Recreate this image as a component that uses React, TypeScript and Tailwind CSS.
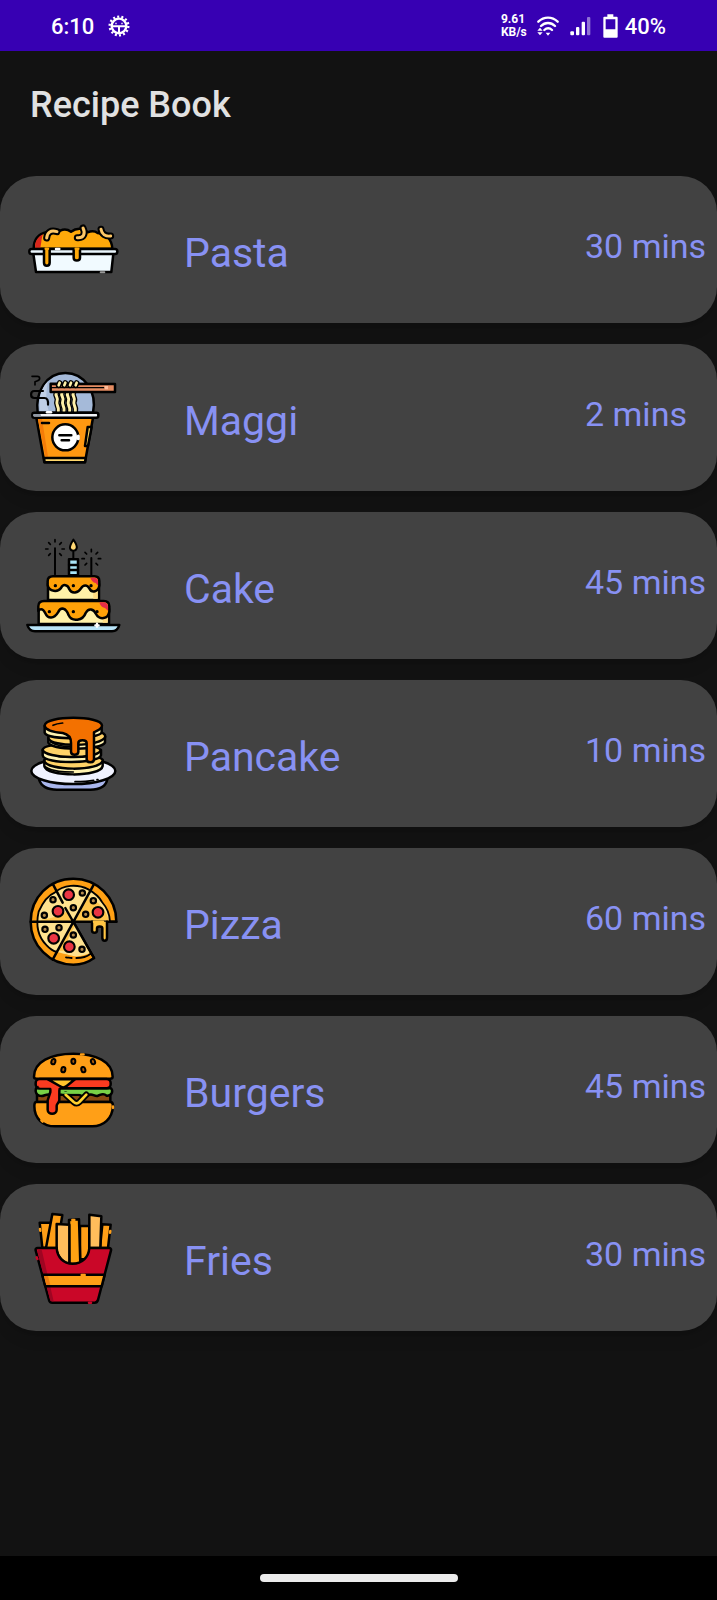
import type { ReactNode } from "react";

const ink = { stroke: "#000", strokeWidth: 7.5, strokeLinecap: "round", strokeLinejoin: "round" } as const;

function Art({ viewBox, children }: { viewBox: string; children: ReactNode }) {
  return (
    <svg viewBox={viewBox} className="mb-0.5 size-24 shrink-0" fill="none" aria-hidden="true" {...ink}>
      {children}
    </svg>
  );
}

function PastaIcon() {
  const noodles = ["M95 113c2-18 12-24 31-19", "M187 112c19 2 25-12 17-29", "M258 87c2 14 14 22 29 20"];
  return (
    <Art viewBox="30 2 288 288">
      <path d="M56 145c0-26 14-44 40-50 12-6 26-8 40-4 10-5 22-4 32 3 16-12 38-12 50 2 10-4 22-4 30 2 26 2 42 20 44 47z" fill="#ffa90a" />
      <path d="M60 142c0-20 8-32 24-40-5 10-4 22-8 40z" fill="#d9261c" stroke="none" />
      <path d="M55 160h240l-6 55H63z" fill="#f1faff" />
      <rect x="43" y="146" width="264" height="15" rx="7" fill="#eaf6fd" />
      <path d="M87 147v40c0 12 17 12 17 0v-40" fill="#ffa90a" />
      <path d="M176 147v25c0 11 19 11 19 0v-25" fill="#ffa90a" />
      <path d="M92 145h7M182 145h8" stroke="#ffa90a" />
      <path d="M123 146h10" stroke="#fff" />
      <path d="M257 216h11" stroke="#999" strokeWidth="6" />
      {noodles.map((d) => (
        <g key={d}>
          <path d={d} strokeWidth="21" />
          <path d={d} stroke="#ffc866" strokeWidth="9" />
        </g>
      ))}
    </Art>
  );
}

function MaggiIcon() {
  return (
    <Art viewBox="30 25 288 288">
      <path d="M68 156c-8-62 26-119 83-119s96 57 83 119z" fill="#a5bad9" />
      <path d="M75 150c-4-36 2-66 24-88-6 28-8 58 2 88z" fill="#c0cfe6" stroke="none" />
      <path d="M51 47h16c9 0 9 11 1 13l-8 3v10" strokeWidth="5" />
      <path d="M84 91H58c-13 0-13 21 0 21h30c9 0 12 7 11 20" strokeWidth="6.5" />
      {[124, 141, 158, 175].map((x) => (
        <g key={x}>
          <path d={`M${x} 97c-5 10 8 14 2 26-4 9 7 14 4 27`} strokeWidth="17" />
        </g>
      ))}
      {[124, 141, 158, 175].map((x) => (
        <path key={x} d={`M${x} 96c-5 11 8 15 2 27-4 9 7 14 4 28`} stroke="#fff0a8" strokeWidth="9" />
      ))}
      <path d="M107 69l193 1v24H107z" fill="#e58c62" />
      <path d="M108 81h158" strokeWidth="4" />
      <path d="M268 76h11v10h-9z" fill="#ffbd9b" stroke="none" />
      {[131, 148, 165, 182].map((x) => (
        <g key={x}>
          <path d={`M${x} 74l3-7`} strokeWidth="17" />
          <path d={`M${x} 74l3-8`} stroke="#fff0a8" strokeWidth="8" />
        </g>
      ))}
      <path d="M64 171h170l-24 134H88z" fill="#ff9811" />
      <path d="M69 175h12l18 113h-8z" fill="#f47c08" stroke="none" />
      <path d="M87 292h125l-2 13H89z" fill="#ffd86d" />
      <rect x="52" y="156" width="198" height="15" rx="6" fill="#f2f4f8" />
      <path d="M58 164h16" stroke="#8f98a5" />
      <path d="M96 155h12" stroke="#fff" />
      <path d="M81 187h21" />
      <circle cx="151" cy="230" r="39" fill="#fff" />
      <path d="M190 226v8" stroke="#fff" strokeWidth="9" />
      <path d="M133 224h36M140 239h22" />
      <path d="M218 199h12l-11 57h-9z" fill="#ffd45c" />
    </Art>
  );
}

function Spark({ x, y }: { x: number; y: number }) {
  return (
    <path
      strokeWidth="5"
      d={`M${x - 28} ${y}h7M${x + 21} ${y}h7M${x} ${y - 28}v7M${x - 19} ${y - 19}l5 5M${x + 19} ${y - 19}l-5 5M${x - 19} ${y + 19}l5-5M${x + 19} ${y + 19}l-5-5`}
    />
  );
}

function CakeIcon() {
  return (
    <Art viewBox="30 35 288 288">
      <Spark x={120} y={71} />
      <Spark x={229} y={100} />
      <path d="M120 69v78M229 98v50" strokeWidth="6" />
      <path d="M175 80v20" strokeWidth="6" />
      <path d="M175 43c8 11 12 19 10 26-3 10-17 10-20 0-2-7 3-15 10-26z" fill="#ffd873" strokeWidth="6" />
      <path d="M162 102h27v48h-27z" fill="#a8e4f7" />
      <path d="M162 119h27M162 134h27" strokeWidth="7" />
      <path d="M99 175h153v49H99z" fill="#fff1a8" />
      <path d="M234 190h14v30h-13z" fill="#ffdc83" stroke="none" />
      <path d="M98 180v-12c0-10 6-15 16-15h124c10 0 15 6 15 15v13c-3 18-22 24-30 8-6-11-18-12-25 0-8 14-28 18-35 3-4-15-19-17-25-4-9 13-36 12-40-8z" fill="#ffa108" />
      <path d="M226 157h12c7 0 11 4 11 11v13l-7-8c-8-2-13-7-16-16z" fill="#e62d48" stroke="none" />
      <path d="M71 250h211v46H71z" fill="#fff1a8" />
      <path d="M264 270h14v22h-15z" fill="#ffdc83" stroke="none" />
      <path d="M70 257v-14c0-11 6-16 17-16h179c11 0 17 6 17 16v15c-3 24-30 27-40 8-7-15-22-20-31-3-8 23-41 28-51 7-8-23-23-27-32-9-12 20-30 21-38 3-9-19-18-11-21-7z" fill="#ffa108" />
      <path d="M253 231h13c8 0 13 5 13 13v12l-9-8c-10-1-15-8-17-17z" fill="#e62d48" stroke="none" />
      <path d="M121 181h.1M175 181h.1M228 181h.1M103 259h.1M175 259h.1M246 259h.1" strokeWidth="10" />
      <path d="M37 299h276c-4 14-10 19-22 19H60c-12 0-19-6-23-19z" fill="#b9e4f8" />
      <path d="M246 295v9M241 300h10" stroke="#fff" strokeWidth="7" />
    </Art>
  );
}

function PancakeIcon() {
  return (
    <Art viewBox="30 13 288 288">
      <path d="M72 236c6 20 25 31 54 31h100c28 0 47-9 51-31z" fill="#a9b6ed" />
      <ellipse cx="175" cy="211" rx="126" ry="39" fill="#f0f2ff" />
      <path d="M180 243c20 0 40-1 56-4M246 237h3" strokeWidth="5" />
      <path d="M88 179v17c4 33 170 34 175 0v-18" fill="#fff2b0" />
      <path d="M88 180c4 31 170 33 175-1 0-21-175-21-175 1z" fill="#ffd267" />
      <path d="M92 199c24 15 55 15 83 15" strokeWidth="5" />
      <path d="M83 147v17c4 28 170 26 175 0v-16" fill="#fff2b0" />
      <path d="M83 148c8 25 157 31 174 2 0-23-174-28-174-2z" fill="#ffd267" />
      <path d="M130 167c29 4 62 3 87 0" strokeWidth="5" />
      <path d="M100 112v14c14 25 158 23 170 0v-17" fill="#fff2b0" />
      <path d="M100 112c6 29 161 27 171-4 0-10-11-13-25-14L103 100z" fill="#ffd267" />
      <path d="M107 124c19 12 38 14 61 14" strokeWidth="5" />
      <path d="M89 76v20c7 24 164 20 171-1V76" fill="#fff2b0" />
      <path d="M89 74c3-30 169-30 172 0 1 12-15 15-24 21v81c0 12-22 12-22 0v-49c0-11-25-11-25 0v26c0 12-22 12-22 0v-27c0-16-7-25-25-29-29-2-54-10-54-23z" fill="#f37100" />
      <path d="M114 74c8-4 18-6 29-7" strokeWidth="5" />
    </Art>
  );
}

function PizzaIcon() {
  return (
    <Art viewBox="30 22 288 288">
      <path d="M175 168h129c0-72-57-129-129-129S47 96 47 168s57 129 128 129c25 0 45-7 62-20z" fill="#ffa014" />
      <path d="M175 168h110c-1-26-9-42-24-59-10-19-25-29-41-38-33-17-75-14-101 10-25 10-39 37-48 57-9 40-1 77 24 101 14 18 38 22 60 27 28 10 43 7 69-3z" fill="#ffe28f" stroke="none" />
      <path d="M177 166l42-74c32 17 52 36 63 73zM173 166H75c4-9 43-3 64-25l18-2zM126 255l46-80 11 0c-15 30-30 45-28 80z" fill="#ffc64d" stroke="none" />
      <path d="M285 168c-1-26-9-42-24-59-10-19-25-29-41-38-33-17-75-14-101 10-25 10-39 37-48 57-9 40-1 77 24 101 11 12 20 17 31 20M153 275c8 1 13 2 17 2M184 277c18 0 32-4 42-12" strokeWidth="5.5" />
      <path d="M47 168h257M235 59L113 282M114 56l29 55M151 127l86 150" />
      <path d="M231 168v26c0 10 15 10 15 0v-6c0-7 16-7 16 0v28c0 12 14 12 14 0v-48" fill="#ffc543" />
      <path d="M237 168h27" stroke="#ffc543" />
      {[[161, 87], [129, 137], [249, 140], [116, 218], [163, 243]].map(([x, y]) => (
        <circle key={x} cx={x} cy={y} r="16" fill="#ea3543" strokeWidth="6.5" />
      ))}
      {[[114, 102], [202, 82], [235, 105], [175, 126], [212, 146], [88, 149], [90, 191], [132, 186], [175, 208], [201, 251]].map(([x, y]) => (
        <circle key={`${x}-${y}`} cx={x} cy={y} r="8" fill="#b48a4d" strokeWidth="6.5" />
      ))}
    </Art>
  );
}

function BurgerIcon() {
  return (
    <Art viewBox="30 1 288 288">
      <path d="M66 160h220v24H66z" fill="#8a4b12" />
      <path d="M63 143h225c8 10 1 23-13 22-12-10-17-2-28 1-11 1-17-10-27-2-10 8-21 3-30-2H106c-15-4-19 8-33 3-9-2-13-12-10-22z" fill="#78d147" />
      <path d="M57 108c0-45 50-69 118-69s118 24 118 69c0 4-4 6-8 6H65c-5 0-8-2-8-6z" fill="#ff9f17" />
      <path d="M64 184h222c7 0 8 6 8 12-2 38-28 61-62 61h-112c-35 0-62-22-62-61 0-7 2-12 6-12z" fill="#ff9f17" />
      <path d="M152 162l24 22c6 5 12 5 17 0l21-22" strokeWidth="19" />
      <path d="M152 162l24 22c6 5 12 5 17 0l21-22" stroke="#ffd12e" strokeWidth="8" />
      <path d="M144 156h56" stroke="#78d147" strokeWidth="6" />
      <rect x="62" y="115" width="225" height="28" rx="12" fill="#fb3b20" />
      <path d="M70 139h26c10 0 11 8 10 15l-8 25v28c0 16 27 16 27 0v-12c0-6 8-9 8-17v-28c0-7 5-11 13-11" fill="#fb3b20" />
      <path d="M76 135h60" stroke="#fb3b20" strokeWidth="12" />
      <path d="M99 116h81l-25 20c-7 6-14 6-21 0z" fill="#ffc52c" />
      {[[115, 63, 15], [175, 62, 0], [234, 63, -20], [145, 87, 10], [205, 87, -15]].map(([x, y, r]) => (
        <ellipse key={x} cx={x} cy={y} rx="6" ry="8" fill="#ae5b08" strokeWidth="6" transform={`rotate(${r} ${x} ${y})`} />
      ))}
      <path d="M198 41h8M83 243l-4-4M294 197v5" stroke="#ff9f17" strokeWidth="7" />
    </Art>
  );
}

function FriesIcon() {
  return (
    <Art viewBox="30 25 288 288">
      <path d="M74 66h35v75H82z" fill="#ff9f17" />
      <path d="M112 40l30 3-16 99H93z" fill="#ff9f17" />
      <path d="M262 71l25 1-8 70h-24z" fill="#ff9f17" />
      <path d="M195 76h28v100h-28z" fill="#ff9f17" />
      <path d="M162 58l30-2 4 134h-33z" fill="#ffa313" />
      <path d="M125 70l38 2v120c-18-8-34-20-38-42z" fill="#ffbd5b" />
      <path d="M223 42l36 5-3 95h-33z" fill="#ffbd5b" />
      <path d="M68 142h57c2 28 20 47 48 47s48-19 50-47h59c5 0 7 3 6 7l-39 149c-2 6-5 8-10 8H112c-6 0-9-3-10-8L62 149c-1-4 1-7 6-7z" fill="#ca0728" />
      <path d="M70 147h10l36 155h-5c-4 0-5-1-6-5L67 151z" fill="#9f0522" stroke="none" />
      <path d="M82 222h187l-9 35H91z" fill="#ff9f17" />
      <path d="M87 226h12l7 27H94z" fill="#ed7d10" stroke="none" />
      <path d="M200 223h9" stroke="#ff9f17" />
      <path d="M65 170l2 5M222 306h6" stroke="#ca0728" />
      <path d="M75 85l1 5M172 58h6M286 91l-1 5" stroke="#ff9f17" />
    </Art>
  );
}

const recipes = [
  { name: "Pasta", time: "30 mins", Icon: PastaIcon },
  { name: "Maggi", time: "2 mins", Icon: MaggiIcon },
  { name: "Cake", time: "45 mins", Icon: CakeIcon },
  { name: "Pancake", time: "10 mins", Icon: PancakeIcon },
  { name: "Pizza", time: "60 mins", Icon: PizzaIcon },
  { name: "Burgers", time: "45 mins", Icon: BurgerIcon },
  { name: "Fries", time: "30 mins", Icon: FriesIcon },
];

function StatusBar() {
  return (
    <div className="flex h-[51px] items-center bg-[#3700b3] px-[51px] text-white">
      <span className="pt-0.5 text-[22px] leading-6 font-medium">6:10</span>
      <svg viewBox="0 0 66 66" className="ml-3.5 size-[22px]" fill="none" stroke="currentColor" aria-hidden="true">
        <circle cx="33" cy="33" r="22" strokeWidth="7" />
        <circle cx="33" cy="33" r="28" strokeWidth="7" strokeDasharray="6 6.566" />
        <path d="M12 34h42M33 34v20" strokeWidth="6" />
        <path d="M24 23v5M42 23v5" strokeWidth="4" />
      </svg>
      <span className="ml-auto flex flex-col text-[12px] leading-[13px] font-bold">
        <span>9.61</span>
        <span>KB/s</span>
      </span>
      <svg viewBox="0 0 66 60" className="ml-2.5 h-5 w-[22px]" fill="none" stroke="currentColor" strokeWidth="7" aria-hidden="true">
        <path d="M4 17C21 1 45 1 62 17M12 30c12-12 30-12 42 0M22 42c7-7 16-7 23 0" strokeLinecap="round" />
        <path d="M33 59l-7-9h14zM9 35l8 9H1zM9 58l-8-9h16z" fill="currentColor" stroke="none" />
      </svg>
      <svg viewBox="0 0 63 60" className="ml-[11px] h-5 w-[21px]" fill="currentColor" aria-hidden="true">
        <rect x="1" y="46" width="11" height="12" rx="3" />
        <rect x="18" y="33" width="10" height="25" rx="3" />
        <rect x="35" y="17" width="10" height="41" rx="3" />
        <rect x="51" y="3" width="10" height="55" rx="3" opacity=".45" />
      </svg>
      <svg viewBox="0 0 45 72" className="ml-3 h-6 w-[15px]" fill="currentColor" fillRule="evenodd" aria-hidden="true">
        <path d="M13 1h18v7h10c2 0 3 1 3 3v57c0 2-1 3-3 3H4c-2 0-3-1-3-3V11c0-2 1-3 3-3h9zM8 16v30h29V16z" />
      </svg>
      <span className="ml-[7px] pt-0.5 text-[22px] leading-6 font-medium">40%</span>
    </div>
  );
}

export default function App() {
  return (
    <div className="flex min-h-screen flex-col bg-[#121212] font-['Roboto','Noto_Sans',sans-serif]">
      <StatusBar />
      <header className="flex h-[107px] items-center px-[30px]">
        <h1 className="text-[36px] leading-10 font-medium text-[#e1e1e1]">Recipe Book</h1>
      </header>
      <main className="flex-1 pt-[18px] pb-6">
        <ul className="flex flex-col gap-[21px]">
          {recipes.map(({ name, time, Icon }) => (
            <li key={name} className="flex h-[147px] items-center rounded-[36px] bg-[#424242] pl-[25px] text-[#8891f3] shadow-lg">
              <Icon />
              <h2 className="ml-[63px] flex-1 pt-1.5 text-[41px] leading-[50px]">{name}</h2>
              <p className="w-[132px] pb-2 text-[34px] leading-10">{time}</p>
            </li>
          ))}
        </ul>
      </main>
      <footer className="flex h-11 items-center justify-center bg-black">
        <div className="h-2 w-[198px] rounded-full bg-[#ebebeb]" />
      </footer>
    </div>
  );
}
